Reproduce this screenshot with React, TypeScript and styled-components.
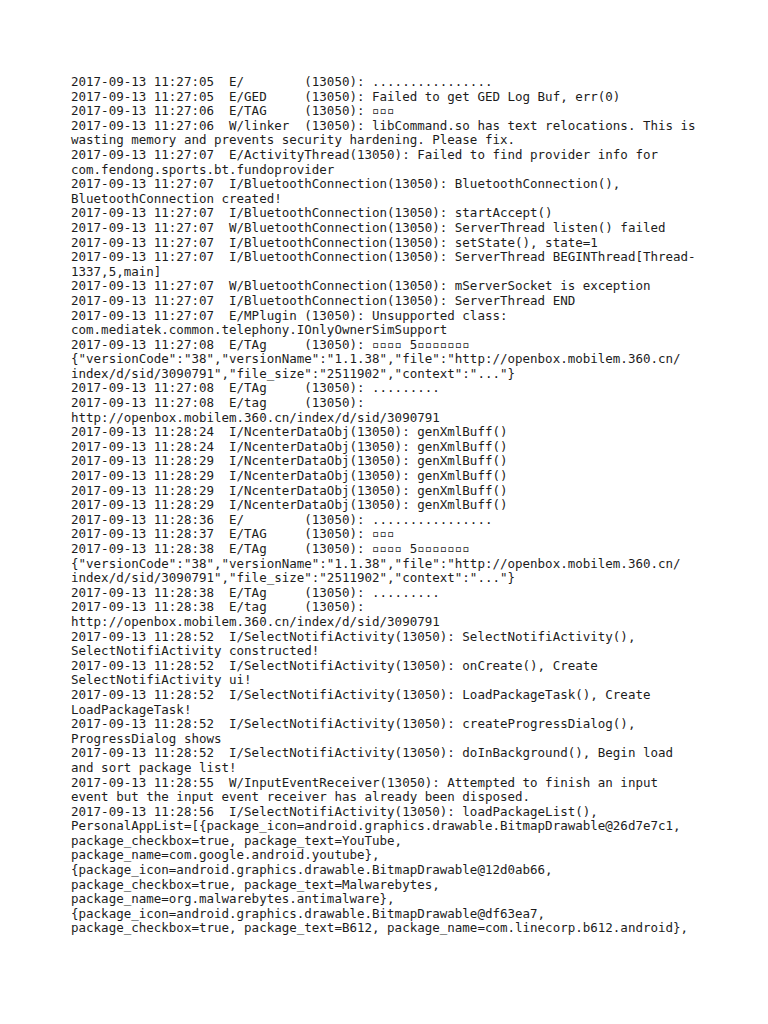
import React from "react";
import styled, { createGlobalStyle } from "styled-components";

const GlobalStyle = createGlobalStyle`
  html, body {
    margin: 0;
    padding: 0;
    background: #ffffff;
  }
`;

const Page = styled.main`
  width: 768px;
  min-height: 1024px;
  box-sizing: border-box;
  padding: 75px 0 0 71px;
  background: #ffffff;
`;

const Log = styled.div`
  display: flex;
  flex-direction: column;
  font-family: "DejaVu Sans Mono", "Liberation Mono", monospace;
  font-size: 12.5px;
  line-height: 14.6px;
  color: #1c1c1c;
`;

const Line = styled.div`
  white-space: pre;
`;

const Tofu = styled.span`
  font-size: 12.5px;
`;

const T = "\u25AB";

const lines: string[] = [
  "2017-09-13 11:27:05  E/        (13050): ................",
  "2017-09-13 11:27:05  E/GED     (13050): Failed to get GED Log Buf, err(0)",
  `2017-09-13 11:27:06  E/TAG     (13050): ${T}${T}${T}`,
  "2017-09-13 11:27:06  W/linker  (13050): libCommand.so has text relocations. This is",
  "wasting memory and prevents security hardening. Please fix.",
  "2017-09-13 11:27:07  E/ActivityThread(13050): Failed to find provider info for",
  "com.fendong.sports.bt.fundoprovider",
  "2017-09-13 11:27:07  I/BluetoothConnection(13050): BluetoothConnection(),",
  "BluetoothConnection created!",
  "2017-09-13 11:27:07  I/BluetoothConnection(13050): startAccept()",
  "2017-09-13 11:27:07  W/BluetoothConnection(13050): ServerThread listen() failed",
  "2017-09-13 11:27:07  I/BluetoothConnection(13050): setState(), state=1",
  "2017-09-13 11:27:07  I/BluetoothConnection(13050): ServerThread BEGINThread[Thread-",
  "1337,5,main]",
  "2017-09-13 11:27:07  W/BluetoothConnection(13050): mServerSocket is exception",
  "2017-09-13 11:27:07  I/BluetoothConnection(13050): ServerThread END",
  "2017-09-13 11:27:07  E/MPlugin (13050): Unsupported class:",
  "com.mediatek.common.telephony.IOnlyOwnerSimSupport",
  `2017-09-13 11:27:08  E/TAg     (13050): ${T}${T}${T}${T} 5${T}${T}${T}${T}${T}${T}${T}`,
  '{"versionCode":"38","versionName":"1.1.38","file":"http://openbox.mobilem.360.cn/',
  'index/d/sid/3090791","file_size":"2511902","context":"..."}',
  "2017-09-13 11:27:08  E/TAg     (13050): .........",
  "2017-09-13 11:27:08  E/tag     (13050):",
  "http://openbox.mobilem.360.cn/index/d/sid/3090791",
  "2017-09-13 11:28:24  I/NcenterDataObj(13050): genXmlBuff()",
  "2017-09-13 11:28:24  I/NcenterDataObj(13050): genXmlBuff()",
  "2017-09-13 11:28:29  I/NcenterDataObj(13050): genXmlBuff()",
  "2017-09-13 11:28:29  I/NcenterDataObj(13050): genXmlBuff()",
  "2017-09-13 11:28:29  I/NcenterDataObj(13050): genXmlBuff()",
  "2017-09-13 11:28:29  I/NcenterDataObj(13050): genXmlBuff()",
  "2017-09-13 11:28:36  E/        (13050): ................",
  `2017-09-13 11:28:37  E/TAG     (13050): ${T}${T}${T}`,
  `2017-09-13 11:28:38  E/TAg     (13050): ${T}${T}${T}${T} 5${T}${T}${T}${T}${T}${T}${T}`,
  '{"versionCode":"38","versionName":"1.1.38","file":"http://openbox.mobilem.360.cn/',
  'index/d/sid/3090791","file_size":"2511902","context":"..."}',
  "2017-09-13 11:28:38  E/TAg     (13050): .........",
  "2017-09-13 11:28:38  E/tag     (13050):",
  "http://openbox.mobilem.360.cn/index/d/sid/3090791",
  "2017-09-13 11:28:52  I/SelectNotifiActivity(13050): SelectNotifiActivity(),",
  "SelectNotifiActivity constructed!",
  "2017-09-13 11:28:52  I/SelectNotifiActivity(13050): onCreate(), Create",
  "SelectNotifiActivity ui!",
  "2017-09-13 11:28:52  I/SelectNotifiActivity(13050): LoadPackageTask(), Create",
  "LoadPackageTask!",
  "2017-09-13 11:28:52  I/SelectNotifiActivity(13050): createProgressDialog(),",
  "ProgressDialog shows",
  "2017-09-13 11:28:52  I/SelectNotifiActivity(13050): doInBackground(), Begin load",
  "and sort package list!",
  "2017-09-13 11:28:55  W/InputEventReceiver(13050): Attempted to finish an input",
  "event but the input event receiver has already been disposed.",
  "2017-09-13 11:28:56  I/SelectNotifiActivity(13050): loadPackageList(),",
  "PersonalAppList=[{package_icon=android.graphics.drawable.BitmapDrawable@26d7e7c1,",
  "package_checkbox=true, package_text=YouTube,",
  "package_name=com.google.android.youtube},",
  "{package_icon=android.graphics.drawable.BitmapDrawable@12d0ab66,",
  "package_checkbox=true, package_text=Malwarebytes,",
  "package_name=org.malwarebytes.antimalware},",
  "{package_icon=android.graphics.drawable.BitmapDrawable@df63ea7,",
  "package_checkbox=true, package_text=B612, package_name=com.linecorp.b612.android},",
];

function renderLine(text: string) {
  const parts = text.split(/(\u25AB+)/);
  return parts.map((p, i) =>
    p.startsWith(T) ? <Tofu key={i}>{p}</Tofu> : <React.Fragment key={i}>{p}</React.Fragment>
  );
}

export default function App() {
  return (
    <>
      <GlobalStyle />
      <Page>
        <Log>
          {lines.map((l, i) => (
            <Line key={i}>{renderLine(l)}</Line>
          ))}
        </Log>
      </Page>
    </>
  );
}
